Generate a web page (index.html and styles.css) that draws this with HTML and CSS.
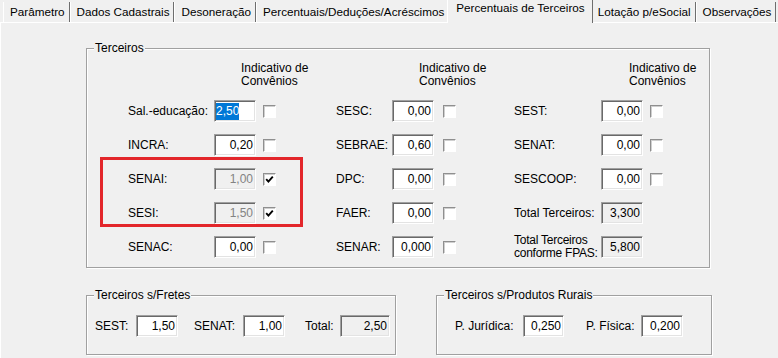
FILE: index.html
```html
<!DOCTYPE html>
<html lang="pt-BR">
<head>
    <meta charset="UTF-8">
    <title>Percentuais de Terceiros</title>
    <link rel="stylesheet" href="styles.css">
</head>
<body>

<div class="window">
    <div class="tabs">
        <div class="tab">Parâmetro</div>
        <div class="tab">Dados Cadastrais</div>
        <div class="tab">Desoneração</div>
        <div class="tab">Percentuais/Deduções/Acréscimos</div>
        <div class="tab active">Percentuais de Terceiros</div>
        <div class="tab">Lotação p/eSocial</div>
        <div class="tab">Observações</div>
    </div>

    <div class="page">
        <div class="group terceiros">
            <span class="group-title">Terceiros</span>
            <div class="grid">
                <div class="head c1">Indicativo de<br>Convênios</div>
                <div class="head c2">Indicativo de<br>Convênios</div>
                <div class="head c3">Indicativo de<br>Convênios</div>

                <div class="row c1"><span class="label">Sal.-educação:</span><div class="edit focused"><span class="sel">2,50</span></div><span class="check"></span></div>
                <div class="row c2"><span class="label">SESC:</span><div class="edit">0,00</div><span class="check"></span></div>
                <div class="row c3"><span class="label">SEST:</span><div class="edit">0,00</div><span class="check"></span></div>

                <div class="row c1"><span class="label">INCRA:</span><div class="edit">0,20</div><span class="check"></span></div>
                <div class="row c2"><span class="label">SEBRAE:</span><div class="edit">0,60</div><span class="check"></span></div>
                <div class="row c3"><span class="label">SENAT:</span><div class="edit">0,00</div><span class="check"></span></div>

                <div class="row c1"><span class="label">SENAI:</span><div class="edit disabled">1,00</div><span class="check checked"><svg viewBox="0 0 9 9" width="9" height="9"><path d="M1.2 4.2 L3.4 6.6 L7.8 1.6" fill="none" stroke="#000" stroke-width="1.9"/></svg></span></div>
                <div class="row c2"><span class="label">DPC:</span><div class="edit">0,00</div><span class="check"></span></div>
                <div class="row c3"><span class="label">SESCOOP:</span><div class="edit">0,00</div><span class="check"></span></div>

                <div class="row c1"><span class="label">SESI:</span><div class="edit disabled">1,50</div><span class="check checked"><svg viewBox="0 0 9 9" width="9" height="9"><path d="M1.2 4.2 L3.4 6.6 L7.8 1.6" fill="none" stroke="#000" stroke-width="1.9"/></svg></span></div>
                <div class="row c2"><span class="label">FAER:</span><div class="edit">0,00</div><span class="check"></span></div>
                <div class="row c3"><span class="label">Total Terceiros:</span><div class="edit readonly">3,300</div></div>

                <div class="row c1"><span class="label">SENAC:</span><div class="edit">0,00</div><span class="check"></span></div>
                <div class="row c2"><span class="label">SENAR:</span><div class="edit">0,000</div><span class="check"></span></div>
                <div class="row c3"><span class="label two-lines">Total Terceiros<br>conforme FPAS:</span><div class="edit readonly">5,800</div></div>
            </div>
            <!-- red mark around SENAI / SESI -->
            <div class="mark"></div>
        </div>

        <div class="bottom">
            <div class="group fretes">
                <span class="group-title">Terceiros s/Fretes</span>
                <div class="line">
                    <span class="label l-sest">SEST:</span><div class="edit">1,50</div>
                    <span class="label l-senat">SENAT:</span><div class="edit">1,00</div>
                    <span class="label l-total">Total:</span><div class="edit readonly wide">2,50</div>
                </div>
            </div>
            <div class="group rurais">
                <span class="group-title">Terceiros s/Produtos Rurais</span>
                <div class="line">
                    <span class="label l-pj">P. Jurídica:</span><div class="edit">0,250</div>
                    <span class="label l-pf">P. Física:</span><div class="edit">0,200</div>
                </div>
            </div>
        </div>
    </div>
</div>

</body>
</html>
```

FILE: styles.css
```css
body {
    margin: 0;
    background-color: #f0f0f0;
    font-family: "Liberation Sans", Arial, sans-serif;
    font-size: 12px;
    color: #000;
}
.window {
    width: 778px;
    height: 358px;
    overflow: hidden;
}

/* tab strip */
.tabs {
    display: flex;
    align-items: flex-end;
    height: 22px;
    padding-left: 3px;
    font-size: 11.7px;
}
.tab {
    height: 20px;
    box-sizing: border-box;
    padding: 3px 4px 0 6px;
    line-height: 14px;
    border-left: 1px solid #fff;
    border-right: 1px solid #6e6e6e;
    white-space: nowrap;
}
.tab.active {
    position: relative;
    z-index: 1;
    height: 23px;
    margin: 0 -2px -1px;
    padding: 1px 7px 0 8px;
    background-color: #f0f0f0;
}
.page {
    height: 336px;
    border-top: 1px solid #fff;
    border-left: 1px solid #fff;
}

/* group boxes */
.group {
    position: relative;
    box-sizing: border-box;
    border: 1px solid #a0a0a0;
    box-shadow: inset 1px 1px #fff, 1px 1px #fff;
}
.group-title {
    position: absolute;
    top: -8px;
    left: 7px;
    padding: 0 1px;
    line-height: 14px;
    background-color: #f0f0f0;
}
.terceiros {
    width: 624px;
    margin: 25px 0 0 85px;
    padding: 13px 0 9px 41px;
}
.grid {
    display: grid;
    grid-template-columns: 208px 178px 1fr;
    grid-template-rows: 26px repeat(5, 22px);
    row-gap: 12px;
}
.head {
    line-height: 13px;
}
.head.c1 { padding-left: 113px; }
.head.c2 { padding-left: 83px; }
.head.c3 { padding-left: 115px; }

.row {
    display: flex;
    align-items: center;
    height: 22px;
}
.row .label {
    flex: none;
    white-space: nowrap;
}
.c1 .label { width: 86px; }
.c2 .label { width: 56px; }
.c3 .label { width: 87px; }
.two-lines {
    line-height: 13px;
    letter-spacing: -0.25px;
}

/* edit boxes */
.edit {
    flex: none;
    width: 42px;
    height: 22px;
    box-sizing: border-box;
    display: flex;
    align-items: center;
    justify-content: flex-end;
    padding-right: 2px;
    background-color: #fff;
    border: 1px solid;
    border-color: #a0a0a0 #fff #fff #a0a0a0;
    box-shadow: inset 1px 1px #696969, inset -1px -1px #e3e3e3;
}
.edit.focused {
    justify-content: flex-start;
    padding: 0 0 0 1px;
}
.sel {
    line-height: 17px;
    background-color: #0078d7;
    color: #fff;
}
.edit.disabled {
    background-color: #f0f0f0;
    color: #838383;
}
.edit.readonly {
    background-color: #f0f0f0;
}
.edit.wide {
    width: 50px;
}

/* check boxes */
.check {
    flex: none;
    width: 13px;
    height: 13px;
    box-sizing: border-box;
    margin-left: 7px;
    display: flex;
    align-items: center;
    justify-content: center;
    background-color: #fff;
    border: 1px solid;
    border-color: #8f8f8f #fff #fff #8f8f8f;
    box-shadow: inset 1px 1px #cfcfcf;
}
.c2 .check { margin-left: 9px; }

.mark {
    position: absolute;
    left: 13px;
    top: 108px;
    width: 203px;
    height: 70px;
    box-sizing: border-box;
    border: 3px solid #e3262b;
}

/* bottom group boxes */
.bottom {
    display: flex;
    margin: 27px 0 0 85px;
}
.fretes {
    width: 310px;
    height: 60px;
    padding: 19px 0 0 8px;
}
.rurais {
    width: 276px;
    height: 60px;
    margin-left: 40px;
    padding: 19px 0 0 18px;
}
.line {
    display: flex;
    align-items: center;
}
.l-sest { width: 41px; }
.l-senat { width: 49px; margin-left: 16px; }
.l-total { width: 35px; margin-left: 20px; }
.l-pj { width: 68px; }
.l-pf { width: 55px; margin-left: 22px; }
.rurais .edit:first-of-type { width: 41px; }
```
